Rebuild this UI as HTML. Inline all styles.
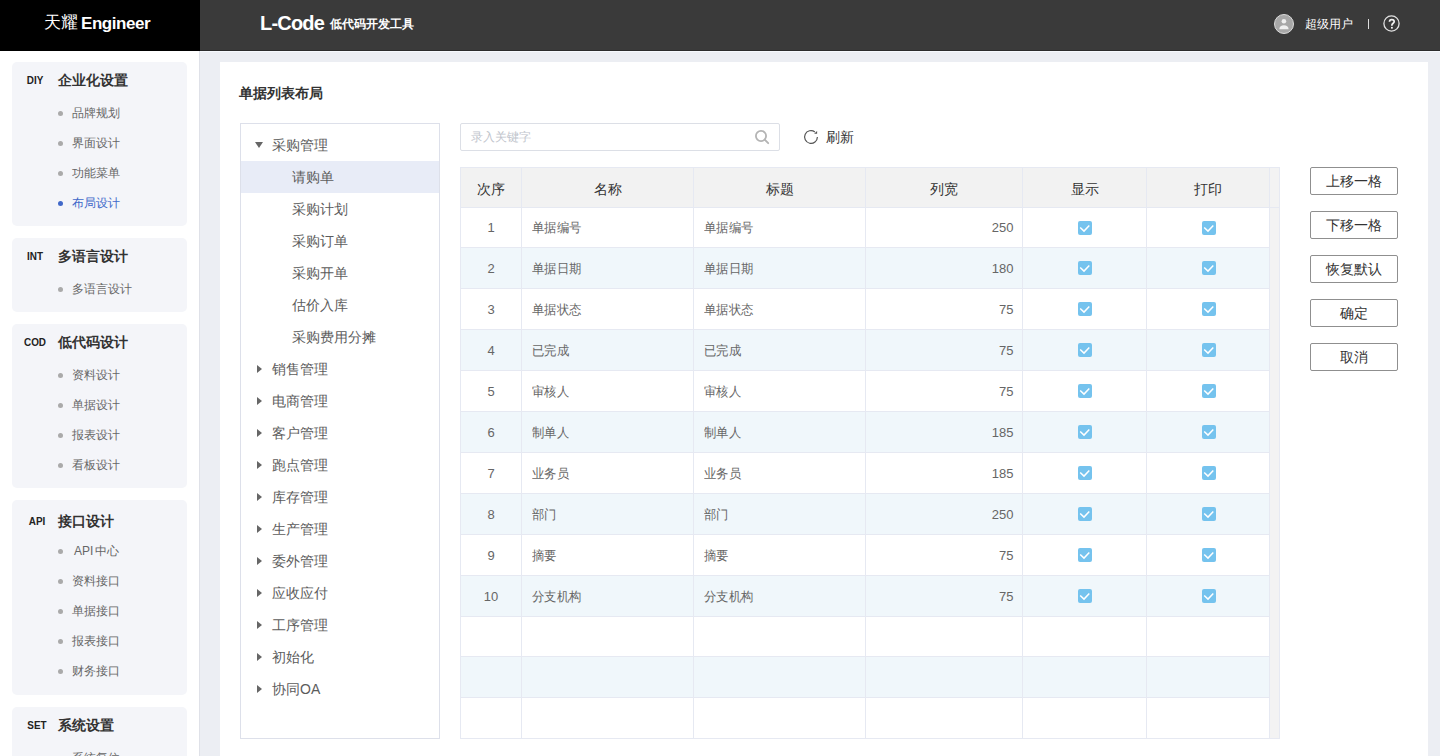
<!DOCTYPE html><html><head><meta charset="utf-8"><style>
*{box-sizing:border-box;margin:0;padding:0}
html,body{width:1440px;height:756px;overflow:hidden;background:#eceef3;font-family:"Liberation Sans",sans-serif;color:#333}
.abs{position:absolute;white-space:nowrap}
#hdrL{left:0;top:0;width:200px;height:51px;background:#000}
#hdrR{left:200px;top:0;width:1240px;height:51px;background:#3a3a3a;border-bottom:1px solid #2c2c2c}
#hline{left:200px;top:51px;width:1240px;height:1px;background:#f6f9fd}
#side{left:0;top:51px;width:200px;height:705px;background:#fff;border-right:1px solid #dfe1e8}
.card{position:absolute;left:12px;width:175px;background:#f4f5f9;border-radius:5px}
.ctag{position:absolute;left:8px;width:30px;text-align:center;top:11px;font-size:11px;font-weight:bold;line-height:14px;color:#222;transform:scaleX(0.9)}
.ctitle{position:absolute;left:46px;top:8px;font-size:14px;font-weight:bold;line-height:20px;color:#333}
.item{position:absolute;left:60px;font-size:12px;line-height:30px;height:30px;color:#666;white-space:nowrap}
.item:before{content:"";position:absolute;left:-14px;top:13px;width:5px;height:5px;border-radius:50%;background:#aaa}
.item.on{color:#4068c9}
.item.on:before{background:#4068c9}
#main{left:220px;top:62px;width:1208px;height:700px;background:#fff}
.t14{font-size:14px;line-height:20px}
#tree{left:240px;top:123px;width:200px;height:616px;border:1px solid #dde0ea;background:#fff}
.trow{position:absolute;left:241px;width:198px;height:32px;line-height:32px;font-size:14px;color:#5c5c5c}
.trow.sel{background:#e8ecf7}
.tri-d{position:absolute;left:255px;width:0;height:0;border-left:4px solid transparent;border-right:4px solid transparent;border-top:6px solid #666}
.tri-r{position:absolute;left:257px;width:0;height:0;border-top:4px solid transparent;border-bottom:4px solid transparent;border-left:5px solid #666}
#search{left:460px;top:123px;width:320px;height:28px;border:1px solid #dcdfe6;border-radius:2px;background:#fff}
.btn{position:absolute;left:1310px;width:88px;height:28px;border:1px solid #8f8f8f;border-radius:2px;background:#fff;font-size:14px;line-height:27px;text-align:center;color:#333}
.cell{position:absolute;white-space:nowrap}
.chk{position:absolute;width:14px;height:14px;border-radius:2px;background:#75c3ee}
.chk svg{position:absolute;left:0;top:0}
</style></head><body>
<div id="hdrL" class="abs"></div><div id="hdrR" class="abs"></div><div id="hline" class="abs"></div>
<div class="abs" style="left:44px;top:12px;height:22px;line-height:22px;color:#fff;font-size:17px">天耀<b style="font-size:17px;letter-spacing:-0.45px;margin-left:3px;position:relative;top:1px">Engineer</b></div>
<div class="abs" style="left:260px;top:11px;line-height:24px;color:#fff;font-size:20px;font-weight:bold;letter-spacing:-0.8px">L-Code</div><div class="abs" style="left:330px;top:14px;line-height:20px;color:#fff;font-size:12px;font-weight:bold">低代码开发工具</div>
<svg class="abs" style="left:1274px;top:14px" width="20" height="20" viewBox="0 0 20 20"><circle cx="10" cy="10" r="9.5" fill="#a8a8a8" stroke="#dcdcdc" stroke-width="1"/><circle cx="9.9" cy="7.3" r="2.3" fill="#f0f0f0"/><path d="M5.3 15.3C5.3 12.6 7.3 11.2 9.9 11.2C12.5 11.2 14.6 12.6 14.6 15.3Z" fill="#f0f0f0"/></svg>
<div class="abs" style="left:1305px;top:15px;line-height:18px;font-size:12px;color:#fff">超级用户</div>
<div class="abs" style="left:1368px;top:19px;width:1px;height:10px;background:#ddd"></div>
<svg class="abs" style="left:1383px;top:15px" width="17" height="17" viewBox="0 0 17 17"><circle cx="8.5" cy="8.5" r="7.6" fill="none" stroke="#e2e2e2" stroke-width="1.3"/><path d="M6.5 6.7C6.5 5.3 7.5 4.6 8.8 4.6C10.2 4.6 11.2 5.4 11.2 6.7C11.2 8.1 8.9 8.4 8.9 10.1L8.9 10.7" fill="none" stroke="#f2f2f2" stroke-width="1.7"/><rect x="8" y="11.9" width="1.8" height="1.7" fill="#f2f2f2"/></svg>
<div id="side" class="abs"></div>
<div class="card" style="top:62px;height:164px">
<div class="ctag" style="top:11px;left:8px">DIY</div><div class="ctitle" style="top:8px">企业化设置</div>
<div class="item" style="top:36px">品牌规划</div>
<div class="item" style="top:66px">界面设计</div>
<div class="item" style="top:96px">功能菜单</div>
<div class="item on" style="top:126px">布局设计</div>
</div>
<div class="card" style="top:238px;height:74px">
<div class="ctag" style="top:11px;left:8px">INT</div><div class="ctitle" style="top:8px">多语言设计</div>
<div class="item" style="top:36px">多语言设计</div>
</div>
<div class="card" style="top:324px;height:164px">
<div class="ctag" style="top:11px;left:8px">COD</div><div class="ctitle" style="top:8px">低代码设计</div>
<div class="item" style="top:36px">资料设计</div>
<div class="item" style="top:66px">单据设计</div>
<div class="item" style="top:96px">报表设计</div>
<div class="item" style="top:126px">看板设计</div>
</div>
<div class="card" style="top:500px;height:195px">
<div class="ctag" style="top:14px;left:10px">API</div><div class="ctitle" style="top:11px">接口设计</div>
<div class="item" style="top:36px"><span style="margin-left:2px;margin-right:1.5px">API</span>中心</div>
<div class="item" style="top:66px">资料接口</div>
<div class="item" style="top:96px">单据接口</div>
<div class="item" style="top:126px">报表接口</div>
<div class="item" style="top:156px">财务接口</div>
</div>
<div class="card" style="top:707px;height:200px">
<div class="ctag" style="top:11px;left:10px">SET</div><div class="ctitle" style="top:8px">系统设置</div>
<div class="item" style="top:36px">系统复位</div>
<div class="item" style="top:66px">系统参数</div>
</div>
<div id="main" class="abs"></div>
<div class="abs t14" style="left:239px;top:83px;font-weight:bold;color:#333">单据列表布局</div>
<div id="tree" class="abs"></div>
<div class="trow" style="top:129px"><span style="position:absolute;left:31px;top:0.3px">采购管理</span></div>
<div class="tri-d" style="top:142px"></div>
<div class="trow sel" style="top:161px"><span style="position:absolute;left:51px;top:0.3px">请购单</span></div>
<div class="trow" style="top:193px"><span style="position:absolute;left:51px;top:0.3px">采购计划</span></div>
<div class="trow" style="top:225px"><span style="position:absolute;left:51px;top:0.3px">采购订单</span></div>
<div class="trow" style="top:257px"><span style="position:absolute;left:51px;top:0.3px">采购开单</span></div>
<div class="trow" style="top:289px"><span style="position:absolute;left:51px;top:0.3px">估价入库</span></div>
<div class="trow" style="top:321px"><span style="position:absolute;left:51px;top:0.3px">采购费用分摊</span></div>
<div class="trow" style="top:353px"><span style="position:absolute;left:31px;top:0.3px">销售管理</span></div>
<div class="tri-r" style="top:365px"></div>
<div class="trow" style="top:385px"><span style="position:absolute;left:31px;top:0.3px">电商管理</span></div>
<div class="tri-r" style="top:397px"></div>
<div class="trow" style="top:417px"><span style="position:absolute;left:31px;top:0.3px">客户管理</span></div>
<div class="tri-r" style="top:429px"></div>
<div class="trow" style="top:449px"><span style="position:absolute;left:31px;top:0.3px">跑点管理</span></div>
<div class="tri-r" style="top:461px"></div>
<div class="trow" style="top:481px"><span style="position:absolute;left:31px;top:0.3px">库存管理</span></div>
<div class="tri-r" style="top:493px"></div>
<div class="trow" style="top:513px"><span style="position:absolute;left:31px;top:0.3px">生产管理</span></div>
<div class="tri-r" style="top:525px"></div>
<div class="trow" style="top:545px"><span style="position:absolute;left:31px;top:0.3px">委外管理</span></div>
<div class="tri-r" style="top:557px"></div>
<div class="trow" style="top:577px"><span style="position:absolute;left:31px;top:0.3px">应收应付</span></div>
<div class="tri-r" style="top:589px"></div>
<div class="trow" style="top:609px"><span style="position:absolute;left:31px;top:0.3px">工序管理</span></div>
<div class="tri-r" style="top:621px"></div>
<div class="trow" style="top:641px"><span style="position:absolute;left:31px;top:0.3px">初始化</span></div>
<div class="tri-r" style="top:653px"></div>
<div class="trow" style="top:673px"><span style="position:absolute;left:31px;top:0.3px">协同OA</span></div>
<div class="tri-r" style="top:685px"></div>
<div id="search" class="abs"></div>
<div class="abs" style="left:471px;top:128px;line-height:18px;font-size:12px;color:#c0c4cc">录入关键字</div>
<svg class="abs" style="left:754px;top:129px" width="16" height="16" viewBox="0 0 16 16"><circle cx="7" cy="7" r="5.1" fill="none" stroke="#b4b4b4" stroke-width="1.8"/><line x1="10.7" y1="10.7" x2="14.2" y2="14.2" stroke="#b4b4b4" stroke-width="1.9" stroke-linecap="round"/></svg>
<svg class="abs" style="left:803px;top:129px" width="16" height="16" viewBox="0 0 16 16"><path d="M14.4 8A6.4 6.4 0 1 1 11.9 2.9" fill="none" stroke="#555" stroke-width="1.2"/><path d="M14.1 1.9L14.1 4.8L11.1 4.8Z" fill="#555"/></svg>
<div class="abs t14" style="left:826px;top:127px;color:#333">刷新</div>
<div class="abs" style="left:460px;top:167px;width:820px;height:572px;border:1px solid #e6e9f2;background:#fff"></div>
<div class="abs" style="left:461px;top:168px;width:818px;height:40px;background:#f2f2f2"></div>
<div class="abs" style="left:1270px;top:168px;width:9px;height:570px;background:#f3f3f3"></div>
<div class="abs" style="left:461px;top:248px;width:808px;height:40px;background:#f0f7fb"></div>
<div class="abs" style="left:461px;top:330px;width:808px;height:40px;background:#f0f7fb"></div>
<div class="abs" style="left:461px;top:412px;width:808px;height:40px;background:#f0f7fb"></div>
<div class="abs" style="left:461px;top:494px;width:808px;height:40px;background:#f0f7fb"></div>
<div class="abs" style="left:461px;top:576px;width:808px;height:40px;background:#f0f7fb"></div>
<div class="abs" style="left:461px;top:657px;width:808px;height:40px;background:#f0f7fb"></div>
<div class="abs" style="left:461px;top:207px;width:818px;height:1px;background:#e6e9f2"></div>
<div class="abs" style="left:461px;top:247px;width:808px;height:1px;background:#e6e9f2"></div>
<div class="abs" style="left:461px;top:288px;width:808px;height:1px;background:#e6e9f2"></div>
<div class="abs" style="left:461px;top:329px;width:808px;height:1px;background:#e6e9f2"></div>
<div class="abs" style="left:461px;top:370px;width:808px;height:1px;background:#e6e9f2"></div>
<div class="abs" style="left:461px;top:411px;width:808px;height:1px;background:#e6e9f2"></div>
<div class="abs" style="left:461px;top:452px;width:808px;height:1px;background:#e6e9f2"></div>
<div class="abs" style="left:461px;top:493px;width:808px;height:1px;background:#e6e9f2"></div>
<div class="abs" style="left:461px;top:534px;width:808px;height:1px;background:#e6e9f2"></div>
<div class="abs" style="left:461px;top:575px;width:808px;height:1px;background:#e6e9f2"></div>
<div class="abs" style="left:461px;top:616px;width:808px;height:1px;background:#e6e9f2"></div>
<div class="abs" style="left:461px;top:656px;width:808px;height:1px;background:#e6e9f2"></div>
<div class="abs" style="left:461px;top:697px;width:808px;height:1px;background:#e6e9f2"></div>
<div class="abs" style="left:521px;top:168px;width:1px;height:570px;background:#e6e9f2"></div>
<div class="abs" style="left:693px;top:168px;width:1px;height:570px;background:#e6e9f2"></div>
<div class="abs" style="left:865px;top:168px;width:1px;height:570px;background:#e6e9f2"></div>
<div class="abs" style="left:1022px;top:168px;width:1px;height:570px;background:#e6e9f2"></div>
<div class="abs" style="left:1146px;top:168px;width:1px;height:570px;background:#e6e9f2"></div>
<div class="abs" style="left:1269px;top:168px;width:1px;height:570px;background:#e6e9f2"></div>
<div class="cell t14" style="left:461px;top:179px;width:60px;text-align:center;color:#333">次序</div>
<div class="cell t14" style="left:522px;top:179px;width:171px;text-align:center;color:#333">名称</div>
<div class="cell t14" style="left:694px;top:179px;width:171px;text-align:center;color:#333">标题</div>
<div class="cell t14" style="left:866px;top:179px;width:156px;text-align:center;color:#333">列宽</div>
<div class="cell t14" style="left:1023px;top:179px;width:123px;text-align:center;color:#333">显示</div>
<div class="cell t14" style="left:1147px;top:179px;width:122px;text-align:center;color:#333">打印</div>
<div class="cell" style="left:461px;top:219.20px;width:60px;text-align:center;font-size:13px;line-height:18px;color:#666">1</div>
<div class="cell" style="left:532px;top:219.00px;font-size:13px;line-height:18px;color:#666;transform:scaleX(0.95);transform-origin:0 50%">单据编号</div>
<div class="cell" style="left:704px;top:219.00px;font-size:13px;line-height:18px;color:#666;transform:scaleX(0.95);transform-origin:0 50%">单据编号</div>
<div class="cell" style="left:866px;top:219.20px;width:147.5px;text-align:right;font-size:13px;line-height:18px;color:#666">250</div>
<div class="chk" style="left:1078px;top:221px"><svg width="14" height="14" viewBox="0 0 14 14"><path d="M2.2 6.5L6 10.1L11.3 4.6" fill="none" stroke="#fff" stroke-width="1.5"/></svg></div>
<div class="chk" style="left:1202px;top:221px"><svg width="14" height="14" viewBox="0 0 14 14"><path d="M2.2 6.5L6 10.1L11.3 4.6" fill="none" stroke="#fff" stroke-width="1.5"/></svg></div>
<div class="cell" style="left:461px;top:259.70px;width:60px;text-align:center;font-size:13px;line-height:18px;color:#666">2</div>
<div class="cell" style="left:532px;top:259.50px;font-size:13px;line-height:18px;color:#666;transform:scaleX(0.95);transform-origin:0 50%">单据日期</div>
<div class="cell" style="left:704px;top:259.50px;font-size:13px;line-height:18px;color:#666;transform:scaleX(0.95);transform-origin:0 50%">单据日期</div>
<div class="cell" style="left:866px;top:259.70px;width:147.5px;text-align:right;font-size:13px;line-height:18px;color:#666">180</div>
<div class="chk" style="left:1078px;top:261px"><svg width="14" height="14" viewBox="0 0 14 14"><path d="M2.2 6.5L6 10.1L11.3 4.6" fill="none" stroke="#fff" stroke-width="1.5"/></svg></div>
<div class="chk" style="left:1202px;top:261px"><svg width="14" height="14" viewBox="0 0 14 14"><path d="M2.2 6.5L6 10.1L11.3 4.6" fill="none" stroke="#fff" stroke-width="1.5"/></svg></div>
<div class="cell" style="left:461px;top:300.70px;width:60px;text-align:center;font-size:13px;line-height:18px;color:#666">3</div>
<div class="cell" style="left:532px;top:300.50px;font-size:13px;line-height:18px;color:#666;transform:scaleX(0.95);transform-origin:0 50%">单据状态</div>
<div class="cell" style="left:704px;top:300.50px;font-size:13px;line-height:18px;color:#666;transform:scaleX(0.95);transform-origin:0 50%">单据状态</div>
<div class="cell" style="left:866px;top:300.70px;width:147.5px;text-align:right;font-size:13px;line-height:18px;color:#666">75</div>
<div class="chk" style="left:1078px;top:302px"><svg width="14" height="14" viewBox="0 0 14 14"><path d="M2.2 6.5L6 10.1L11.3 4.6" fill="none" stroke="#fff" stroke-width="1.5"/></svg></div>
<div class="chk" style="left:1202px;top:302px"><svg width="14" height="14" viewBox="0 0 14 14"><path d="M2.2 6.5L6 10.1L11.3 4.6" fill="none" stroke="#fff" stroke-width="1.5"/></svg></div>
<div class="cell" style="left:461px;top:341.70px;width:60px;text-align:center;font-size:13px;line-height:18px;color:#666">4</div>
<div class="cell" style="left:532px;top:341.50px;font-size:13px;line-height:18px;color:#666;transform:scaleX(0.95);transform-origin:0 50%">已完成</div>
<div class="cell" style="left:704px;top:341.50px;font-size:13px;line-height:18px;color:#666;transform:scaleX(0.95);transform-origin:0 50%">已完成</div>
<div class="cell" style="left:866px;top:341.70px;width:147.5px;text-align:right;font-size:13px;line-height:18px;color:#666">75</div>
<div class="chk" style="left:1078px;top:343px"><svg width="14" height="14" viewBox="0 0 14 14"><path d="M2.2 6.5L6 10.1L11.3 4.6" fill="none" stroke="#fff" stroke-width="1.5"/></svg></div>
<div class="chk" style="left:1202px;top:343px"><svg width="14" height="14" viewBox="0 0 14 14"><path d="M2.2 6.5L6 10.1L11.3 4.6" fill="none" stroke="#fff" stroke-width="1.5"/></svg></div>
<div class="cell" style="left:461px;top:382.70px;width:60px;text-align:center;font-size:13px;line-height:18px;color:#666">5</div>
<div class="cell" style="left:532px;top:382.50px;font-size:13px;line-height:18px;color:#666;transform:scaleX(0.95);transform-origin:0 50%">审核人</div>
<div class="cell" style="left:704px;top:382.50px;font-size:13px;line-height:18px;color:#666;transform:scaleX(0.95);transform-origin:0 50%">审核人</div>
<div class="cell" style="left:866px;top:382.70px;width:147.5px;text-align:right;font-size:13px;line-height:18px;color:#666">75</div>
<div class="chk" style="left:1078px;top:384px"><svg width="14" height="14" viewBox="0 0 14 14"><path d="M2.2 6.5L6 10.1L11.3 4.6" fill="none" stroke="#fff" stroke-width="1.5"/></svg></div>
<div class="chk" style="left:1202px;top:384px"><svg width="14" height="14" viewBox="0 0 14 14"><path d="M2.2 6.5L6 10.1L11.3 4.6" fill="none" stroke="#fff" stroke-width="1.5"/></svg></div>
<div class="cell" style="left:461px;top:423.70px;width:60px;text-align:center;font-size:13px;line-height:18px;color:#666">6</div>
<div class="cell" style="left:532px;top:423.50px;font-size:13px;line-height:18px;color:#666;transform:scaleX(0.95);transform-origin:0 50%">制单人</div>
<div class="cell" style="left:704px;top:423.50px;font-size:13px;line-height:18px;color:#666;transform:scaleX(0.95);transform-origin:0 50%">制单人</div>
<div class="cell" style="left:866px;top:423.70px;width:147.5px;text-align:right;font-size:13px;line-height:18px;color:#666">185</div>
<div class="chk" style="left:1078px;top:425px"><svg width="14" height="14" viewBox="0 0 14 14"><path d="M2.2 6.5L6 10.1L11.3 4.6" fill="none" stroke="#fff" stroke-width="1.5"/></svg></div>
<div class="chk" style="left:1202px;top:425px"><svg width="14" height="14" viewBox="0 0 14 14"><path d="M2.2 6.5L6 10.1L11.3 4.6" fill="none" stroke="#fff" stroke-width="1.5"/></svg></div>
<div class="cell" style="left:461px;top:464.70px;width:60px;text-align:center;font-size:13px;line-height:18px;color:#666">7</div>
<div class="cell" style="left:532px;top:464.50px;font-size:13px;line-height:18px;color:#666;transform:scaleX(0.95);transform-origin:0 50%">业务员</div>
<div class="cell" style="left:704px;top:464.50px;font-size:13px;line-height:18px;color:#666;transform:scaleX(0.95);transform-origin:0 50%">业务员</div>
<div class="cell" style="left:866px;top:464.70px;width:147.5px;text-align:right;font-size:13px;line-height:18px;color:#666">185</div>
<div class="chk" style="left:1078px;top:466px"><svg width="14" height="14" viewBox="0 0 14 14"><path d="M2.2 6.5L6 10.1L11.3 4.6" fill="none" stroke="#fff" stroke-width="1.5"/></svg></div>
<div class="chk" style="left:1202px;top:466px"><svg width="14" height="14" viewBox="0 0 14 14"><path d="M2.2 6.5L6 10.1L11.3 4.6" fill="none" stroke="#fff" stroke-width="1.5"/></svg></div>
<div class="cell" style="left:461px;top:505.70px;width:60px;text-align:center;font-size:13px;line-height:18px;color:#666">8</div>
<div class="cell" style="left:532px;top:505.50px;font-size:13px;line-height:18px;color:#666;transform:scaleX(0.95);transform-origin:0 50%">部门</div>
<div class="cell" style="left:704px;top:505.50px;font-size:13px;line-height:18px;color:#666;transform:scaleX(0.95);transform-origin:0 50%">部门</div>
<div class="cell" style="left:866px;top:505.70px;width:147.5px;text-align:right;font-size:13px;line-height:18px;color:#666">250</div>
<div class="chk" style="left:1078px;top:507px"><svg width="14" height="14" viewBox="0 0 14 14"><path d="M2.2 6.5L6 10.1L11.3 4.6" fill="none" stroke="#fff" stroke-width="1.5"/></svg></div>
<div class="chk" style="left:1202px;top:507px"><svg width="14" height="14" viewBox="0 0 14 14"><path d="M2.2 6.5L6 10.1L11.3 4.6" fill="none" stroke="#fff" stroke-width="1.5"/></svg></div>
<div class="cell" style="left:461px;top:546.70px;width:60px;text-align:center;font-size:13px;line-height:18px;color:#666">9</div>
<div class="cell" style="left:532px;top:546.50px;font-size:13px;line-height:18px;color:#666;transform:scaleX(0.95);transform-origin:0 50%">摘要</div>
<div class="cell" style="left:704px;top:546.50px;font-size:13px;line-height:18px;color:#666;transform:scaleX(0.95);transform-origin:0 50%">摘要</div>
<div class="cell" style="left:866px;top:546.70px;width:147.5px;text-align:right;font-size:13px;line-height:18px;color:#666">75</div>
<div class="chk" style="left:1078px;top:548px"><svg width="14" height="14" viewBox="0 0 14 14"><path d="M2.2 6.5L6 10.1L11.3 4.6" fill="none" stroke="#fff" stroke-width="1.5"/></svg></div>
<div class="chk" style="left:1202px;top:548px"><svg width="14" height="14" viewBox="0 0 14 14"><path d="M2.2 6.5L6 10.1L11.3 4.6" fill="none" stroke="#fff" stroke-width="1.5"/></svg></div>
<div class="cell" style="left:461px;top:587.70px;width:60px;text-align:center;font-size:13px;line-height:18px;color:#666">10</div>
<div class="cell" style="left:532px;top:587.50px;font-size:13px;line-height:18px;color:#666;transform:scaleX(0.95);transform-origin:0 50%">分支机构</div>
<div class="cell" style="left:704px;top:587.50px;font-size:13px;line-height:18px;color:#666;transform:scaleX(0.95);transform-origin:0 50%">分支机构</div>
<div class="cell" style="left:866px;top:587.70px;width:147.5px;text-align:right;font-size:13px;line-height:18px;color:#666">75</div>
<div class="chk" style="left:1078px;top:589px"><svg width="14" height="14" viewBox="0 0 14 14"><path d="M2.2 6.5L6 10.1L11.3 4.6" fill="none" stroke="#fff" stroke-width="1.5"/></svg></div>
<div class="chk" style="left:1202px;top:589px"><svg width="14" height="14" viewBox="0 0 14 14"><path d="M2.2 6.5L6 10.1L11.3 4.6" fill="none" stroke="#fff" stroke-width="1.5"/></svg></div>
<div class="btn" style="top:167px">上移一格</div>
<div class="btn" style="top:211px">下移一格</div>
<div class="btn" style="top:255px">恢复默认</div>
<div class="btn" style="top:299px">确定</div>
<div class="btn" style="top:343px">取消</div>
</body></html>
